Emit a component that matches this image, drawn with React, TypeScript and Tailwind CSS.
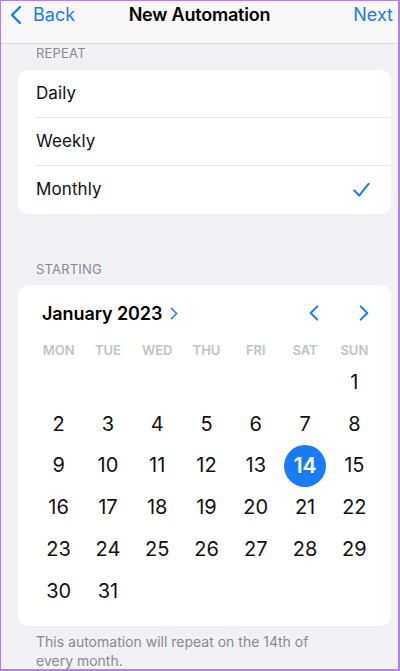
import React from 'react';

const weekdays = ['MON', 'TUE', 'WED', 'THU', 'FRI', 'SAT', 'SUN'];

// January 2023 starts on a Sunday, so six blanks lead the first row
const days: (number | null)[] = [
  ...Array(6).fill(null),
  ...Array.from({ length: 31 }, (_, i) => i + 1),
];

const repeatOptions = ['Daily', 'Weekly', 'Monthly'];

const Chevron = ({ dir, className }: { dir: 'left' | 'right'; className?: string }) => (
  <svg viewBox="0 0 12 20" className={className} fill="none" stroke="currentColor" strokeWidth={2.4} strokeLinecap="round" strokeLinejoin="round">
    {dir === 'left' ? <path d="M10 2 L2 10 L10 18" /> : <path d="M2 2 L10 10 L2 18" />}
  </svg>
);

const App: React.FC = () => {
  return (
    <div
      className="w-[400px] h-[671px] overflow-hidden bg-[#f2f1f6] border-l border-t border-r-2 border-b-2 border-[#b27ff0] flex flex-col"
      style={{ fontFamily: 'Inter, "Noto Sans", sans-serif' }}
    >
      {/* nav bar */}
      <div className="h-[43px] shrink-0 bg-[#f8f8f8] border-b border-[#d9d9dc] flex items-start justify-between pt-[2px] relative">
        <div className="flex items-center text-[#1a7cf5] pl-[9px]">
          <Chevron dir="left" className="w-[12px] h-[20px]" />
          <span className="text-[18px] ml-[11px] leading-[24px]">Back</span>
        </div>
        <span className="absolute left-0 right-0 text-center top-[2px] text-[18px] font-semibold text-black leading-[24px] tracking-[-0.2px]">
          New Automation
        </span>
        <span className="text-[18px] text-[#1a7cf5] pr-[5px] leading-[24px]">Next</span>
      </div>

      <div className="px-[17px] pr-[7px]">
        <div className="pl-[18px] text-[13px] text-[#8b8a8f] leading-[18px] tracking-[0.2px]">REPEAT</div>
        <div className="mt-[8px] bg-white rounded-[10px]">
          {repeatOptions.map((opt, i) => (
            <div key={opt} className="h-[48px] flex items-center pl-[18px] relative">
              <span className="text-[17px] text-[#111] tracking-[0.1px]">{opt}</span>
              {opt === 'Monthly' && (
                <svg viewBox="0 0 18 16" className="absolute right-[21px] w-[17px] h-[16px] text-[#1a7cf5]" fill="none" stroke="currentColor" strokeWidth={2.2} strokeLinecap="round" strokeLinejoin="round">
                  <path d="M1.5 8.5 L6.5 14 L16.5 1.5" />
                </svg>
              )}
              {i < repeatOptions.length - 1 && (
                <div className="absolute bottom-0 left-[18px] right-0 border-b border-[#e2e2e5]" />
              )}
            </div>
          ))}
        </div>

        <div className="pl-[18px] mt-[46px] text-[13px] text-[#8b8a8f] leading-[18px] tracking-[0.2px]">STARTING</div>
        <div className="mt-[7px] bg-white rounded-[10px] pl-[16px] pr-[12px] pt-[16px] pb-[14px]">
          <div className="flex items-center h-[24px]">
            <span className="ml-[8px] text-[18px] font-semibold text-black tracking-[-0.1px]">January 2023</span>
            <Chevron dir="right" className="ml-[8px] w-[8px] h-[13px] text-[#1a7cf5]" />
            <div className="ml-auto flex items-center gap-[40px] mr-[10px] text-[#1a7cf5]">
              <Chevron dir="left" className="w-[10px] h-[18px]" />
              <Chevron dir="right" className="w-[10px] h-[18px]" />
            </div>
          </div>

          <div className="grid grid-cols-7 mt-[16px]">
            {weekdays.map((d) => (
              <div key={d} className="text-center text-[13px] font-semibold text-[#c3c3c7] leading-[18px]">
                {d}
              </div>
            ))}
          </div>

          <div className="grid grid-cols-7 mt-[2px]">
            {days.map((d, i) => (
              <div key={i} className="h-[41.8px] flex items-center justify-center">
                {d === 14 ? (
                  <div className="w-[42px] h-[42px] rounded-full bg-[#1a7cf5] flex items-center justify-center text-white text-[21px] font-semibold">
                    14
                  </div>
                ) : (
                  d && <span className="text-[20px] text-[#111]">{d}</span>
                )}
              </div>
            ))}
          </div>
        </div>

        <p className="pl-[18px] w-[310px] mt-[6px] text-[14px] leading-[19px] text-[#8b8a8f]">
          This automation will repeat on the 14th of every month.
        </p>
      </div>
    </div>
  );
};

export default App;
